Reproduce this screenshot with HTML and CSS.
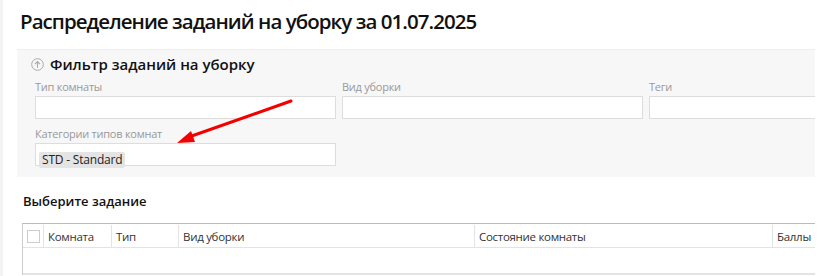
FILE: index.html
```html
<!DOCTYPE html>
<html lang="ru">
<head>
  <meta charset="UTF-8" />
  <title>Распределение заданий на уборку</title>
  <link rel="stylesheet" href="styles.css">
</head>
<body>
  <div class="page">
    <h1 class="title">Распределение заданий на уборку за 01.07.2025</h1>

    <div class="filter">
      <div class="filter-head">
        <svg class="toggle" width="13" height="13" viewBox="0 0 13 13">
          <circle cx="6.5" cy="6.5" r="5.8" fill="none" stroke="#aaa" stroke-width="1"/>
          <path d="M6.5 9.8V3.6M3.9 6.1l2.6-2.6 2.6 2.6" fill="none" stroke="#aaa" stroke-width="1.1"/>
        </svg>
        <span>Фильтр заданий на уборку</span>
      </div>
      <div class="fields">
        <div class="field">
          <label>Тип комнаты</label>
          <div class="input"></div>
        </div>
        <div class="field">
          <label>Вид уборки</label>
          <div class="input"></div>
        </div>
        <div class="field">
          <label>Теги</label>
          <div class="input"></div>
        </div>
        <div class="field">
          <label>Категории типов комнат</label>
          <div class="input"><span class="chip">STD - Standard</span></div>
        </div>
      </div>
      <!-- red pointer drawn over the screenshot -->
      <svg class="pointer" width="130" height="50" viewBox="0 0 130 50">
        <path d="M127 4L22 41" stroke="#f40000" stroke-width="3" stroke-linecap="round"/>
        <path d="M13 46L27 34L31 45Z" fill="#f40000"/>
      </svg>
    </div>

    <div class="tasks">
      <h2 class="subtitle">Выберите задание</h2>
      <div class="grid">
        <div class="grid-head">
          <div class="cell check"><span class="box"></span></div>
          <div class="cell c-room">Комната</div>
          <div class="cell c-type">Тип</div>
          <div class="cell c-kind">Вид уборки</div>
          <div class="cell c-state">Состояние комнаты</div>
          <div class="cell c-score">Баллы</div>
        </div>
        <div class="grid-row"></div>
      </div>
    </div>
  </div>
</body>
</html>
```

FILE: styles.css
```css
* { margin: 0; padding: 0; box-sizing: border-box; }
body {
  background: #fff;
  font-family: "Open Sans", "Noto Sans", sans-serif;
  color: #222;
  overflow: hidden;
}
.page {
  border-left: 3px solid #f3f3f3;
  min-height: 276px;
  width: 815px;
  overflow: hidden;
}
/* Title */
.title {
  font-size: 20.5px;
  font-weight: 600;
  letter-spacing: -0.95px;
  color: #111;
  height: 49px;
  padding: 6px 0 0 17px;
  line-height: 30px;
  white-space: nowrap;
}
/* Filter panel */
.filter {
  position: relative;
  margin-left: 14px;
  background: #f7f7f7;
  border-top: 1px solid #efefef;
  height: 128px;
  padding: 5px 0 0 14px;
}
.filter-head {
  display: flex;
  align-items: center;
  gap: 6px;
  height: 18px;
  font-size: 15px;
  font-weight: 600;
  color: #111;
}
.toggle { margin-top: 1px; }
.fields {
  display: grid;
  grid-template-columns: 301px 301px 301px;
  column-gap: 6px;
  row-gap: 7px;
  margin-top: 6px;
  padding-left: 4px;
}
.field label {
  display: block;
  font-size: 11px;
  letter-spacing: -0.25px;
  color: #999;
  height: 16px;
  line-height: 16px;
  margin-bottom: 1px;
}
.field .input {
  height: 23px;
  background: #fff;
  border: 1px solid #ddd;
  padding: 3px 3px;
}
.chip {
  display: inline-block;
  background: #e4e4e4;
  border-radius: 2px;
  font-size: 12px;
  letter-spacing: -0.2px;
  color: #222;
  line-height: 16px;
  height: 16px;
  padding: 0 3px;
}
.pointer {
  position: absolute;
  left: 147px;
  top: 47px;
}
/* Task list */
.tasks { padding: 16px 0 0 19px; }
.subtitle {
  font-size: 13px;
  font-weight: 600;
  color: #111;
  line-height: 16px;
  margin-left: 1px;
}
.grid {
  margin-top: 14px;
  border-top: 1px solid #bbb;
  border-left: 1px solid #ccc;
  width: 900px;
}
.grid-head {
  display: flex;
  height: 24px;
  border-bottom: 1px solid #e3e3e3;
  font-size: 11.5px;
  letter-spacing: -0.3px;
  color: #333;
}
.cell {
  display: flex;
  align-items: center;
  padding-left: 4px;
  border-right: 1px solid #e3e3e3;
  height: 22px;
  margin-top: 1px;
}
.check { width: 21px; padding-left: 4px; }
.box {
  width: 13px;
  height: 13px;
  border: 1px solid #ccc;
  background: #fff;
}
.c-room { width: 68px; }
.c-type { width: 67px; }
.c-kind { width: 296px; }
.c-state { width: 298px; }
.c-score { width: 80px; border-right: none; }
.grid-row {
  height: 27px;
  border-bottom: 2px solid #e3e3e3;
}
```
